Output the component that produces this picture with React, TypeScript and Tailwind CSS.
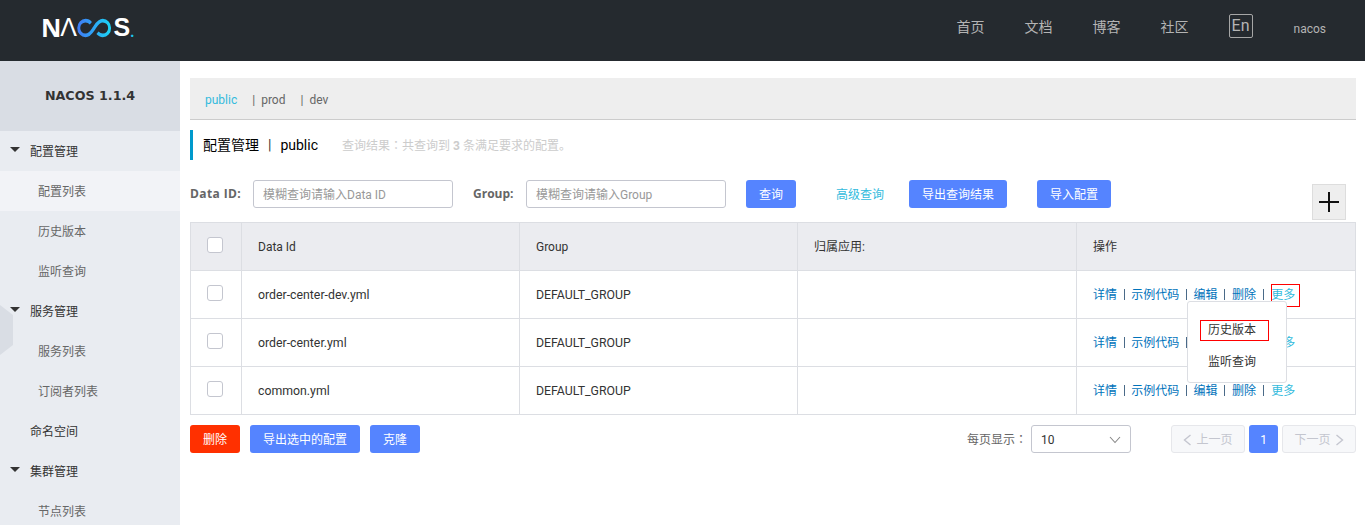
const font = { cjk: "font-['Roboto','Noto_Sans_CJK_SC',sans-serif]" };

const rows = ['order-center-dev.yml', 'order-center.yml', 'common.yml'];
const actions = ['详情', '示例代码', '编辑', '删除'];
const cols = 'grid grid-cols-[50px_278px_278px_279px_1fr]';

function Logo() {
  return (
    <div className="flex items-center text-white font-['Open_Sans',sans-serif] font-bold text-[25px] leading-none ml-[41px] mt-[-6px] select-none">
      <span>N</span>
      <span className="ml-[-1px] font-['Liberation_Sans',sans-serif] font-normal">Λ</span>
      <svg width="38" height="20" viewBox="0 0 46 20" preserveAspectRatio="none" className="ml-[-1.500px]" fill="none">
        <defs>
          <linearGradient id="nacos-logo" x1="0" y1="0" x2="1" y2="0">
            <stop offset="0" stopColor="#3f7df5" />
            <stop offset="1" stopColor="#1cd2f5" />
          </linearGradient>
        </defs>
        <path
          d="M18 5.2C16.3 3.5 14.3 2.6 11.500 2.600 7 2.600 3.300 5.800 3.300 10s3.700 7.400 8.200 7.400c5.500 0 8-4.400 10.500-7.400s5-7.400 10.500-7.400c4.500 0 8.200 3.200 8.200 7.400s-3.700 7.400-8.200 7.400c-2.800 0-4.800-.9-6.500-2.600"
          stroke="url(#nacos-logo)"
          strokeWidth="3.600"
        />
      </svg>
      <span className="font-['Liberation_Sans',sans-serif]">S</span>
      <span className="text-[#1cc6ee] text-[14px] mt-[9px]">.</span>
    </div>
  );
}

function Header() {
  return (
    <header className="h-[61px] bg-[#252a2f] flex items-center justify-between">
      <Logo />
      <nav className={`flex items-center text-[14px] text-[#b4b4b4] mr-[39px] mt-[-6px] ${font.cjk}`}>
        <span>首页</span>
        <span className="ml-[40px]">文档</span>
        <span className="ml-[40px]">博客</span>
        <span className="ml-[40px]">社区</span>
        <span className="ml-[40px] w-[24px] h-[24px] border border-[#a6a6a6] rounded-[2px] flex items-center justify-center leading-none text-[16px] mt-[-3px]">
          En
        </span>
        <span className="ml-[41px] text-[12px] mt-[2px]">nacos</span>
      </nav>
    </header>
  );
}

function Caret() {
  return <span className="absolute left-[10px] top-[16px] w-0 h-0 border-x-[5px] border-x-transparent border-t-[5px] border-t-[#333]" />;
}

function SideItem({ label, level }: { label: string; level: 'group' | 'top' | 'sub' | 'active' }) {
  if (level === 'group' || level === 'top') {
    return (
      <div className="relative h-10 pl-[30px] pt-[2px] flex items-center text-[#333] text-[12px]">
        {level === 'group' && <Caret />}
        {label}
      </div>
    );
  }
  return (
    <div className={`h-10 pl-[38px] pt-[2px] flex items-center text-[12px] text-[#666] ${level === 'active' ? 'bg-[#f2f3f7]' : ''}`}>{label}</div>
  );
}

function Sidebar() {
  return (
    <aside className={`relative w-[180px] shrink-0 bg-[#e9ecf1] overflow-hidden ${font.cjk}`}>
      <div className="h-[70px] bg-[#d9dde4] flex items-center justify-center font-['DejaVu_Sans',sans-serif] font-bold text-[12.700px] text-[#333]">
        NACOS 1.1.4
      </div>
      <SideItem label="配置管理" level="group" />
      <SideItem label="配置列表" level="active" />
      <SideItem label="历史版本" level="sub" />
      <SideItem label="监听查询" level="sub" />
      <SideItem label="服务管理" level="group" />
      <SideItem label="服务列表" level="sub" />
      <SideItem label="订阅者列表" level="sub" />
      <SideItem label="命名空间" level="top" />
      <SideItem label="集群管理" level="group" />
      <SideItem label="节点列表" level="sub" />
      <div className="absolute left-0 top-[244px] w-[13px] h-[50px] bg-[#d9dde4] [clip-path:polygon(0_0,100%_20%,100%_80%,0_100%)]" />
    </aside>
  );
}

function Btn({ label, w, red }: { label: string; w: string; red?: boolean }) {
  return (
    <button className={`h-7 ${w} pt-[1px] rounded-[3px] text-white text-[12px] ${red ? 'bg-[#ff3000]' : 'bg-[#5584ff]'}`}>{label}</button>
  );
}

function Check() {
  return <span className="block w-4 h-4 bg-white border border-[#c4c6cf] rounded-[3px]" />;
}

function Actions() {
  return (
    <div className="flex items-center text-[12px] text-[#0073bb]">
      {actions.map(a => (
        <span key={a} className="flex items-center">
          <span>{a}</span>
          <span className="w-[1px] h-[11px] bg-[#4a6a88] ml-[6.600px] mr-[6.700px]" />
        </span>
      ))}
      <span className="text-[#33bbdd] ml-[1px]">更多</span>
    </div>
  );
}

function Table() {
  return (
    <div className="relative border border-[#dcdee3] text-[12px] text-[#333]">
      <div className={`${cols} h-[47px] bg-[#ebecf0]`}>
        <div className="flex items-center justify-center pb-[3px] pr-[2px]"><Check /></div>
        <div className="border-l-[1px] border-[#dcdee3] pl-4 flex items-center">Data Id</div>
        <div className="border-l-[1px] border-[#dcdee3] pl-4 flex items-center">Group</div>
        <div className="border-l-[1px] border-[#dcdee3] pl-4 flex items-center">归属应用:</div>
        <div className="border-l-[1px] border-[#dcdee3] pl-4 flex items-center">操作</div>
      </div>
      {rows.map(name => (
        <div key={name} className={`${cols} h-[48px] border-t border-[#dcdee3]`}>
          <div className="flex items-center justify-center pb-[3px] pr-[2px]"><Check /></div>
          <div className="border-l-[1px] border-[#dcdee3] pl-4 pt-[2px] flex items-center text-[12.300px]">{name}</div>
          <div className="border-l-[1px] border-[#dcdee3] pl-4 pt-[2px] flex items-center text-[12.300px]">DEFAULT_GROUP</div>
          <div className="border-l-[1px] border-[#dcdee3]" />
          <div className="border-l-[1px] border-[#dcdee3] pl-4 flex items-center"><Actions /></div>
        </div>
      ))}
      {/* dropdown opened from the first row, plus the red marks from the screenshot */}
      <div className="absolute left-[1080px] top-[61px] w-[29px] h-[23px] border border-[#f00]" />
      <div className="absolute left-[996px] top-[78px] w-[100px] h-[82px] bg-white border border-[#dcdee3] rounded-[3px] pt-[19px] pl-[20px] leading-[18px]">
        <div>历史版本</div>
        <div className="mt-[14px]">监听查询</div>
        <div className="absolute left-[12px] top-[18px] w-[69px] h-[21px] border border-[#f00]" />
      </div>
    </div>
  );
}

function Pagination() {
  return (
    <div className="flex items-center text-[12px]">
      <span className="text-[#666] mr-[4px]">
        每页显示<span className="font-['Noto_Sans_CJK_TC',sans-serif]">：</span>
      </span>
      <div className="w-[100px] h-7 border border-[#c4c6cf] rounded-[3px] flex items-center justify-between pl-[9px] pr-[9px] pt-[1px] text-[#333]">
        <span>10</span>
        <svg width="12" height="8" viewBox="0 0 12 8" fill="none" stroke="#888" strokeWidth="1.100">
          <path d="M1 1l5 5.500L11 1" />
        </svg>
      </div>
      <div className="ml-[40px] w-[74px] h-7 bg-[#f7f8fa] border border-[#e6e7eb] rounded-[3px] text-[#c4c6cf] flex items-center justify-center pt-[1px]">
        <svg width="9" height="12" viewBox="0 0 9 12" fill="none" stroke="#c4c6cf" strokeWidth="1.400" className="mr-[4px]">
          <path d="M7.500 1l-6 5 6 5" />
        </svg>
        上一页
      </div>
      <div className="ml-[4px] w-[29px] h-7 bg-[#5584ff] rounded-[3px] text-white flex items-center justify-center pt-[1px]">1</div>
      <div className="ml-[4px] w-[74px] h-7 bg-[#f7f8fa] border border-[#e6e7eb] rounded-[3px] text-[#c4c6cf] flex items-center justify-center pt-[1px]">
        下一页
        <svg width="9" height="12" viewBox="0 0 9 12" fill="none" stroke="#c4c6cf" strokeWidth="1.400" className="ml-[4px]">
          <path d="M1.500 1l6 5-6 5" />
        </svg>
      </div>
    </div>
  );
}

function Content() {
  return (
    <main className={`flex-1 min-w-0 pl-[10px] pr-[9px] pt-[17px] ${font.cjk}`}>
      <div className="h-[42px] bg-[#eee] border-b border-[#ccc] flex items-center pl-[15px] pt-[3px] text-[12px] text-[#666]">
        <span className="text-[#33bbdd]">public</span>
        <span className="ml-[15px] mr-[6px]">|</span>
        <span>prod</span>
        <span className="ml-[15px] mr-[6px]">|</span>
        <span>dev</span>
      </div>
      <div className="mt-[10px] h-[30px] border-l-[3px] border-[#0099cc] pl-[10px] flex items-center">
        <span className="text-[14px] text-black">配置管理</span>
        <span className="text-[14px] text-[#333] mx-[9px]">|</span>
        <span className="text-[14px] text-black">public</span>
        <span className="ml-[24px] text-[12px] text-[#ccc]">
          查询结果<span className="font-['Noto_Sans_CJK_TC',sans-serif]">：</span>共查询到 <b className="font-bold">3</b> 条满足要求的配置。
        </span>
      </div>
      <div className="mt-[20px] flex items-start h-[42px] text-[12px]">
        <label className="w-[51px] font-['Open_Sans',sans-serif] font-bold tracking-[0.400px] text-[#666] h-7 flex items-center mr-[12px] whitespace-nowrap">Data ID:</label>
        <input readOnly placeholder="模糊查询请输入Data ID" className="w-[200px] h-7 border border-[#c4c6cf] rounded-[3px] pl-[9px] pt-[1px] placeholder:text-[#999] outline-none" />
        <label className="w-[41px] ml-[20px] font-['Open_Sans',sans-serif] font-bold text-[#666] h-7 flex items-center mr-[12px] whitespace-nowrap">Group:</label>
        <input readOnly placeholder="模糊查询请输入Group" className="w-[200px] h-7 border border-[#c4c6cf] rounded-[3px] pl-[9px] pt-[1px] placeholder:text-[#999] outline-none" />
        <div className="ml-[20px]"><Btn label="查询" w="w-[50px]" /></div>
        <span className="ml-[40px] h-7 pt-[1px] flex items-center text-[#33bbdd]">高级查询</span>
        <div className="ml-[25px]"><Btn label="导出查询结果" w="w-[98px]" /></div>
        <div className="ml-[30px]"><Btn label="导入配置" w="w-[74px]" /></div>
        <div className="ml-auto mr-[10px] mt-[4px] w-[34px] h-[36px] bg-[#eee] border border-[#ddd] flex items-center justify-center">
          <svg width="20" height="20" viewBox="0 0 20 20" stroke="#111" strokeWidth="2">
            <path d="M0 10h20M10 0v20" />
          </svg>
        </div>
      </div>
      <Table />
      <div className="mt-[10px] flex items-center justify-between">
        <div className="flex gap-[10px]">
          <Btn label="删除" w="w-[50px]" red />
          <Btn label="导出选中的配置" w="w-[110px]" />
          <Btn label="克隆" w="w-[50px]" />
        </div>
        <Pagination />
      </div>
    </main>
  );
}

export default function App() {
  return (
    <div className="h-[525px] w-[1365px] overflow-hidden bg-white flex flex-col">
      <Header />
      <div className="flex flex-1 min-h-0">
        <Sidebar />
        <Content />
      </div>
    </div>
  );
}
